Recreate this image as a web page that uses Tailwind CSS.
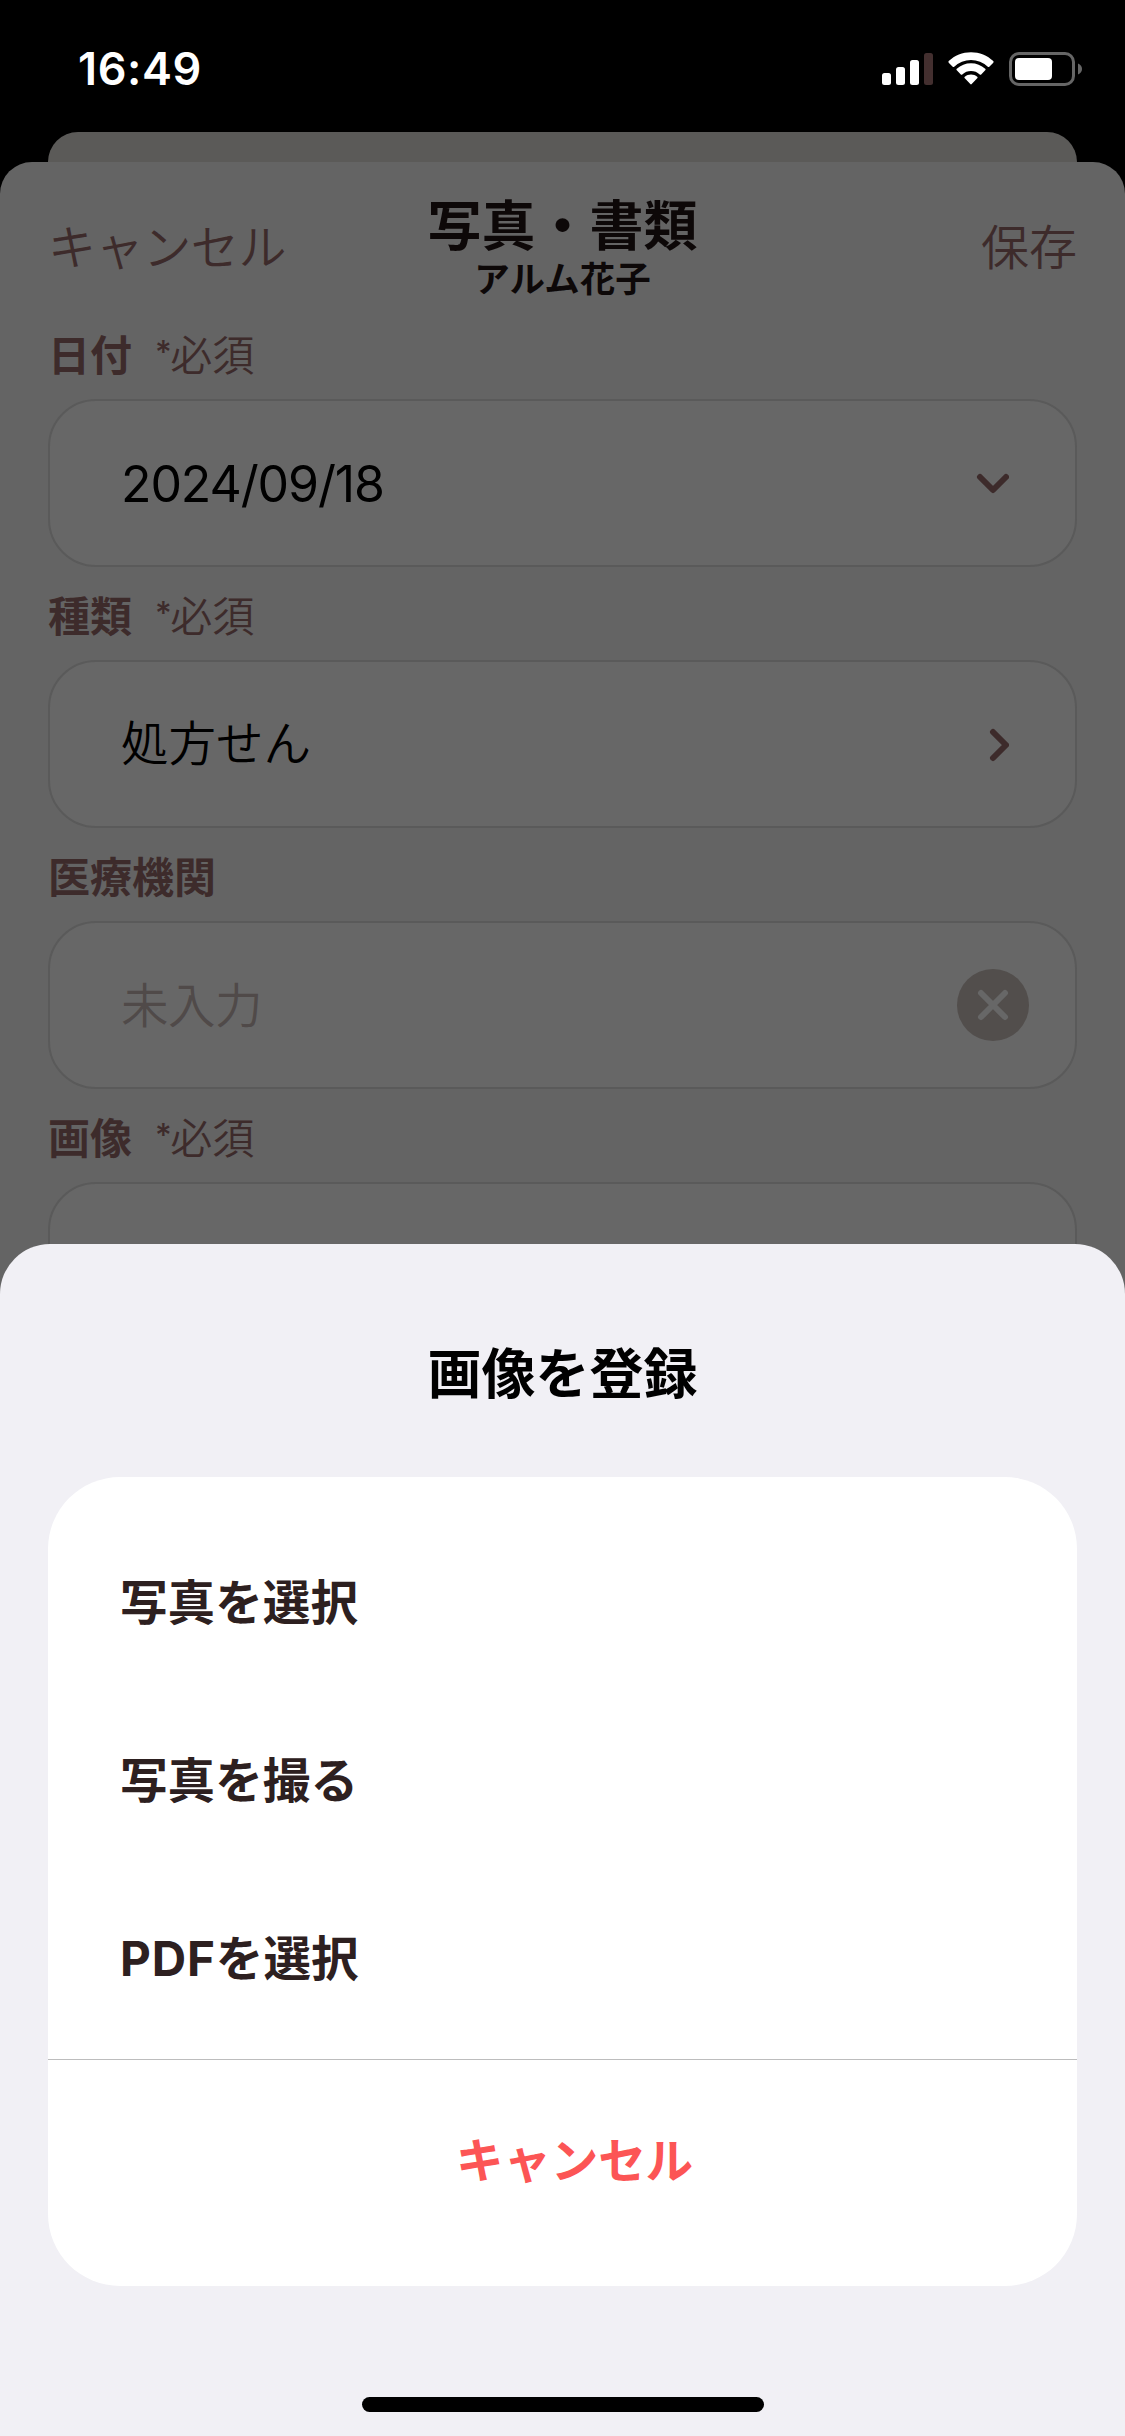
<!DOCTYPE html>
<html lang="ja">
<head>
<meta charset="utf-8">
<title>写真・書類</title>
<script src="https://cdn.jsdelivr.net/npm/@tailwindcss/browser@4"></script>
</head>
<body class="bg-black">
<main class="relative flex h-[2436px] w-[1125px] flex-col overflow-hidden bg-black font-['Inter','Noto_Sans_CJK_JP',sans-serif]">

  <!-- Status bar -->
  <div class="flex h-[132px] shrink-0 items-start justify-between pr-[42px] pl-[78px]">
    <span class="pt-[42px] text-[45px] leading-[54px] font-semibold tracking-[0.6px] text-white">16:49</span>
    <svg class="mt-[50px]" width="203" height="38" viewBox="880 50 203 38" fill="none">
      <rect x="882" y="73" width="9" height="12" rx="2.5" fill="#fff"/>
      <rect x="896" y="67" width="9" height="18" rx="2.5" fill="#fff"/>
      <rect x="910" y="60" width="9" height="25" rx="2.5" fill="#fff"/>
      <rect x="924" y="53" width="9" height="32" rx="2.5" fill="#432f2f"/>
      <path d="M971 52.2c8.400 0 16.400 3.200 22.300 8.900.4.400.4 1.100 0 1.600l-4 4.100c-.4.400-1.100.4-1.500 0a24.300 24.300 0 0 0-33.600 0c-.4.400-1.100.4-1.500 0l-4-4.100c-.4-.5-.4-1.200 0-1.600 5.900-5.700 13.900-8.900 22.300-8.900z" fill="#fff"/>
      <path d="M971 63.300c5.300 0 10.300 2 14.200 5.500.5.400.5 1.100 0 1.500l-4 4.100c-.4.400-1 .4-1.500 0a13 13 0 0 0-17.400 0c-.5.400-1.100.4-1.500 0l-4-4.100c-.5-.4-.5-1.100 0-1.500 3.900-3.500 8.900-5.500 14.200-5.500z" fill="#fff"/>
      <path d="M971 74.400c2.400 0 4.500.8 6.200 2.300.5.400.5 1.100 0 1.500l-5.500 5.900c-.4.400-1 .4-1.400 0l-5.500-5.900c-.5-.4-.5-1.100 0-1.500 1.700-1.500 3.800-2.300 6.200-2.300z" fill="#fff"/>
      <rect x="1010.500" y="53.500" width="63" height="31" rx="8.500" stroke="#666" stroke-width="3"/>
      <rect x="1015" y="58" width="37" height="22" rx="4" fill="#fff"/>
      <path d="M1078 63.500c2.600 1 4 3 4 5.500s-1.400 4.500-4 5.500z" fill="#666"/>
    </svg>
  </div>

  <!-- Card stacked behind the form -->
  <div class="mx-12 h-[30px] shrink-0 rounded-t-[30px] bg-[#5b5a58]"></div>

  <!-- Form, dimmed -->
  <section class="flex flex-1 flex-col rounded-t-[32px] bg-[#646464] px-12 font-[350] text-[#3d2b2b]">
    <header class="grid h-36 grid-cols-3 items-start">
      <span class="pt-[54px] text-[48px] leading-[64px] tracking-[-0.4px]">キャンセル</span>
      <div class="flex flex-col items-center pt-[34px] font-bold whitespace-nowrap text-[#0d0808]">
        <h1 class="text-[54px] leading-[62px]">写真・書類</h1>
        <p class="pt-px text-[35.500px] leading-[42px]">アルム花子</p>
      </div>
      <span class="pt-[54px] text-right text-[48px] leading-[64px]">保存</span>
    </header>

    <label class="flex h-[93px] items-start gap-[23px] pt-[25px] text-[42px] leading-[50px]"><b>日付</b><span><span class="align-[7px] text-[32px] leading-none font-medium tracking-[-1.5px]">*</span>必須</span></label>
    <div class="flex h-[168px] shrink-0 items-center justify-between rounded-[48px] border-2 border-[#5a5a5a] bg-[#676767] pr-[66px] pl-[71px] text-black">
      <span class="pt-[2px] text-[50px] leading-[60px] font-normal tracking-[-1.100px]">2024/09/18</span>
      <svg width="36" height="36" viewBox="0 0 36 36" fill="none" stroke="#3d2b2b" stroke-width="6" stroke-linecap="round" stroke-linejoin="round"><path d="M7 12 20 25 33 12"/></svg>
    </div>

    <label class="flex h-[93px] items-start gap-[23px] pt-[25px] text-[42px] leading-[50px]"><b>種類</b><span><span class="align-[7px] text-[32px] leading-none font-medium tracking-[-1.5px]">*</span>必須</span></label>
    <div class="flex h-[168px] shrink-0 items-center justify-between rounded-[48px] border-2 border-[#5a5a5a] bg-[#676767] pr-[66px] pl-[71px] text-black">
      <span class="text-[47.500px] leading-[60px]">処方せん</span>
      <svg width="36" height="36" viewBox="0 0 36 36" fill="none" stroke="#3d2b2b" stroke-width="6" stroke-linecap="round" stroke-linejoin="round"><path d="M20 6 33 19 20 32"/></svg>
    </div>

    <label class="flex h-[93px] items-start pt-[25px] text-[42px] leading-[50px]"><b>医療機関</b></label>
    <div class="flex h-[168px] shrink-0 items-center justify-between rounded-[48px] border-2 border-[#5a5a5a] bg-[#676767] pr-[46px] pl-[71px] text-[#504a49]">
      <span class="pt-[2px] text-[47.500px] leading-[60px] tracking-[-0.5px]">未入力</span>
      <svg width="72" height="72" viewBox="0 0 72 72" fill="none"><circle cx="36" cy="36" r="36" fill="#524e4c"/><path d="M24 24 48 48M48 24 24 48" stroke="#676767" stroke-width="6" stroke-linecap="round"/></svg>
    </div>

    <label class="flex h-[93px] items-start gap-[23px] pt-[25px] text-[42px] leading-[50px]"><b>画像</b><span><span class="align-[7px] text-[32px] leading-none font-medium tracking-[-1.5px]">*</span>必須</span></label>
    <div class="h-[168px] shrink-0 rounded-[48px] border-2 border-[#5a5a5a] bg-[#676767]"></div>
  </section>

  <!-- Bottom sheet over the form -->
  <section class="absolute inset-x-0 bottom-0 flex h-[1192px] flex-col items-center rounded-t-[50px] bg-[#f1f0f5]">
    <h2 class="h-[233px] pt-[99px] text-[54px] leading-[64px] font-bold text-black">画像を登録</h2>
    <div class="flex h-[809px] w-[1029px] flex-col rounded-[72px] bg-white text-[47.600px] font-bold text-[#2d2020]">
      <ul class="flex h-[582px] flex-col px-[72px] pt-[37px]">
        <li class="flex h-[178px] items-center">写真を選択</li>
        <li class="flex h-[178px] items-center">写真を撮る</li>
        <li class="flex h-[178px] items-center"><span><span class="tracking-[0.9px]">PDF</span>を選択</span></li>
      </ul>
      <button class="flex h-[203px] items-center justify-center border-t border-[#bdbdbd] pl-6 font-bold tracking-[-0.2px] text-[#fc5555]">キャンセル</button>
    </div>
    <div class="mt-[111px] h-[15px] w-[402px] rounded-full bg-black"></div>
  </section>
</main>
</body>
</html>
